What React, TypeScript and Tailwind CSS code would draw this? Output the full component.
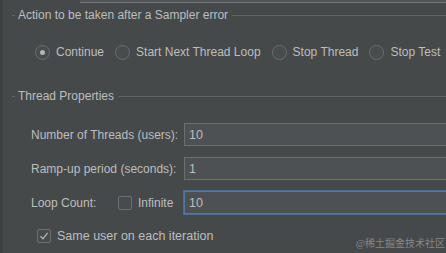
import React from "react";

const FONT = { fontFamily: '"Liberation Sans", Arial, sans-serif' };

function GroupTitle({ title }: { title: string }) {
  return (
    <div className="flex h-[14px] items-center">
      <div className="ml-[9px] h-px w-[3px] bg-[#5f6265]" />
      <span className="ml-[3px] whitespace-nowrap leading-[14px]">{title}</span>
      <div className="ml-[4px] h-px flex-1 bg-[#5f6265]" />
    </div>
  );
}

function Radio({ label, checked }: { label: string; checked?: boolean }) {
  return (
    <div className="flex items-center gap-[6px]">
      <div className="flex h-[15px] w-[15px] items-center justify-center rounded-full border border-[#6c6f71] bg-[#484c4e]">
        {checked && <div className="h-[5px] w-[5px] rounded-full bg-[#b4b6b7]" />}
      </div>
      <span className="whitespace-nowrap leading-[16px]">{label}</span>
    </div>
  );
}

function Checkbox({ checked }: { checked?: boolean }) {
  return (
    <div className="flex h-[14px] w-[14px] items-center justify-center rounded-[2px] border border-[#6c6f71] bg-[#474b4d]">
      {checked && (
        <svg width="10" height="10" viewBox="0 0 10 10">
          <path d="M1.5 5.2 L4 7.8 L8.6 1.8" fill="none" stroke="#b4b6b7" strokeWidth="1.3" />
        </svg>
      )}
    </div>
  );
}

function Field({ value, focused }: { value: string; focused?: boolean }) {
  return (
    <div
      className={`-mr-[10px] flex h-[23px] flex-1 items-center border bg-[#4d5153] pl-[4px] text-[12.5px] leading-[14px] ${
        focused ? "border-[#5179a8] shadow-[0_0_0_1px_#4b6e99]" : "border-[#6c6f71]"
      }`}
    >
      {value}
    </div>
  );
}

function Row({ label, children }: { label: string; children: React.ReactNode }) {
  return (
    <div className="flex h-[23px] items-center pl-[28px]">
      <span className="w-[153px] whitespace-nowrap leading-[14px]">{label}</span>
      {children}
    </div>
  );
}

export default function App() {
  return (
    <div
      style={FONT}
      className="relative h-[253px] w-[446px] overflow-hidden border-l-[3px] border-[#3f4244] bg-[#45494a] text-[12px] text-[#bdbebf]"
    >
      <div className="h-[3px] pl-[77px]">
        <div className="h-[3px] border-b border-[#75787a] bg-[#505456]" />
      </div>

      <div className="mt-[5px]">
        <GroupTitle title="Action to be taken after a Sampler error" />
      </div>

      <div className="mt-[22px] flex h-[16px] items-center gap-[11px] pl-[32px]">
        <Radio label="Continue" checked />
        <Radio label="Start Next Thread Loop" />
        <Radio label="Stop Thread" />
        <Radio label="Stop Test" />
      </div>

      <div className="mt-[29px]">
        <GroupTitle title="Thread Properties" />
      </div>

      <div className="mt-[20px] flex flex-col gap-[11px]">
        <Row label="Number of Threads (users):">
          <Field value="10" />
        </Row>
        <Row label="Ramp-up period (seconds):">
          <Field value="1" />
        </Row>
        <div className="flex h-[23px] items-center pl-[28px]">
          <span className="w-[87px] whitespace-nowrap leading-[14px]">Loop Count:</span>
          <Checkbox />
          <span className="ml-[6px] w-[46px] whitespace-nowrap leading-[14px]">Infinite</span>
          <Field value="10" focused />
        </div>
      </div>

      <div className="mt-[15px] flex h-[14px] items-center gap-[6px] pl-[34px]">
        <Checkbox checked />
        <span className="whitespace-nowrap text-[12.5px] leading-[14px]">Same user on each iteration</span>
      </div>

      <div
        className="absolute bottom-[3px] right-[1px] text-[10px] leading-[13px] text-[#85888a]"
        style={{ fontFamily: '"Liberation Serif", "Noto Sans CJK SC", serif' }}
      >
        @稀土掘金技术社区
      </div>
    </div>
  );
}
